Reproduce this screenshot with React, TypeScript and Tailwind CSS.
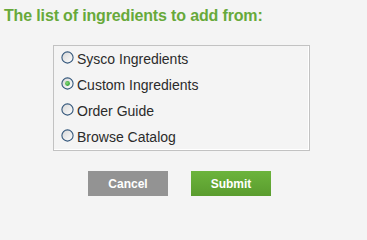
const options = [
  { id: "sysco", label: "Sysco Ingredients" },
  { id: "custom", label: "Custom Ingredients" },
  { id: "guide", label: "Order Guide" },
  { id: "catalog", label: "Browse Catalog" },
];

function Radio({ checked }: { checked: boolean }) {
  return (
    <svg width="13" height="13" viewBox="0 0 13 13" className="shrink-0">
      <defs>
        <linearGradient id="rf" x1="0" y1="0" x2="1" y2="1">
          <stop offset="0" stopColor="#d6d6d6" />
          <stop offset="1" stopColor="#ffffff" />
        </linearGradient>
        <radialGradient id="rd" cx="0.4" cy="0.4" r="0.7">
          <stop offset="0" stopColor="#8fdc7c" />
          <stop offset="1" stopColor="#1c9628" />
        </radialGradient>
      </defs>
      <circle cx="6.5" cy="6.5" r="5.6" fill="url(#rf)" stroke="#35587c" strokeWidth="1.1" />
      {checked && <circle cx="6.5" cy="6.5" r="2.4" fill="url(#rd)" />}
    </svg>
  );
}

export default function App() {
  const selected = "custom";

  return (
    <div className="w-full min-h-screen bg-[#f4f4f4] font-['Liberation_Sans',Arial,sans-serif]">
      <div className="w-[367px] h-[202px] overflow-hidden">
        <h1 className="pl-[4px] pt-[7px] text-[16px] leading-[18px] font-bold tracking-[-0.15px] text-[#67a93a]">
          The list of ingredients to add from:
        </h1>

        <div className="ml-[53px] mt-[20px] w-[257px] h-[106px] border border-[#c2c2c2] shadow-[inset_-1px_-1px_0_#ffffff]">
          {options.map((opt) => (
            <label
              key={opt.id}
              className="flex items-center h-[26px] pl-[7px] gap-[3px] text-[14px] text-[#2b2b2b]"
            >
              <span className="mt-[-3px]">
                <Radio checked={opt.id === selected} />
              </span>
              <span>{opt.label}</span>
            </label>
          ))}
        </div>

        <div className="ml-[88px] mt-[20px] flex gap-[23px]">
          <button className="w-[80px] h-[25px] bg-[#939393] text-white text-[12px] font-bold">
            Cancel
          </button>
          <button className="w-[80px] h-[25px] bg-gradient-to-b from-[#6cb43c] to-[#5a9c2e] text-white text-[12px] font-bold">
            Submit
          </button>
        </div>
      </div>
    </div>
  );
}
